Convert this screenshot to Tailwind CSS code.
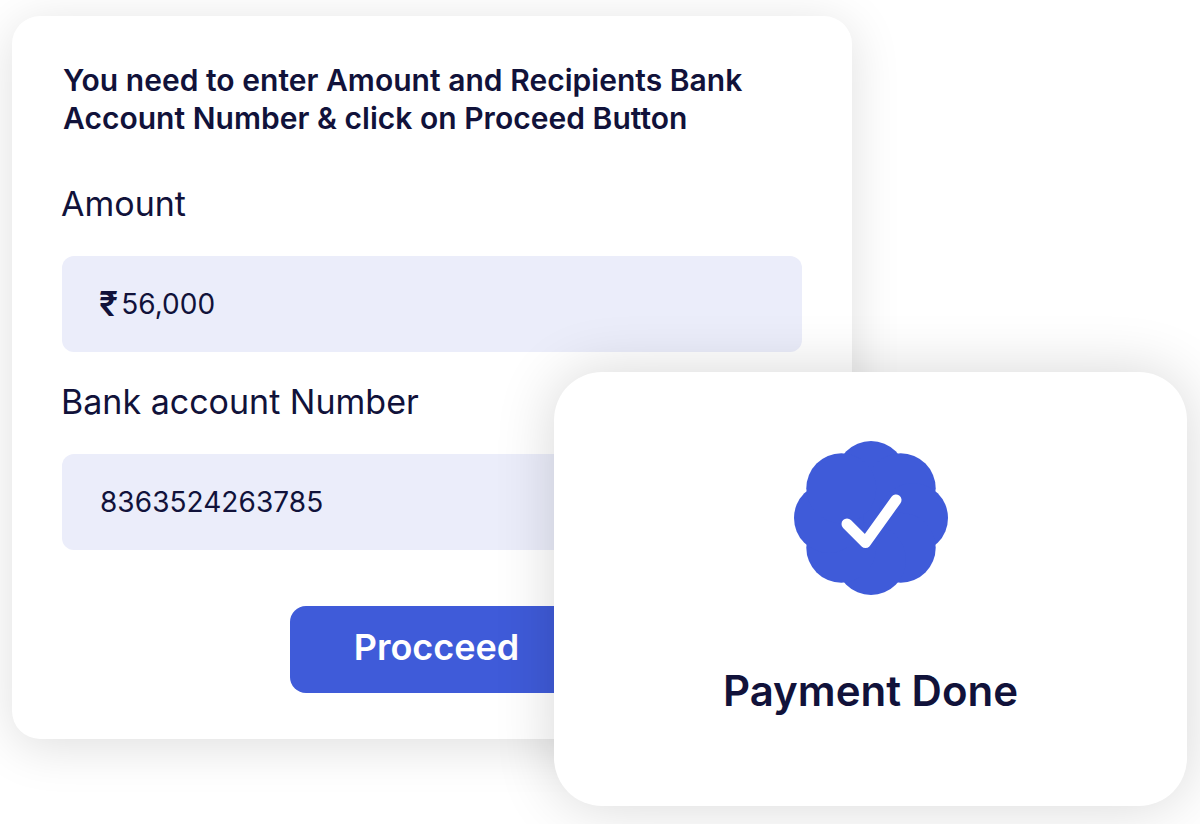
<!DOCTYPE html>
<html lang="en">
<head>
  <meta charset="UTF-8" />
  <meta name="viewport" content="width=device-width, initial-scale=1.0" />
  <title>Payment</title>
  <script src="https://cdn.jsdelivr.net/npm/@tailwindcss/browser@4"></script>
</head>
<body class="bg-white font-['Inter',sans-serif] text-[#11123a] overflow-hidden">
  <div class="relative w-[1200px] h-[824px] overflow-hidden pl-3 pt-4">
    <div class="w-[840px] h-[723px] bg-white rounded-[28px] shadow-[0_8px_50px_rgba(0,0,0,0.13)] pl-[50px] pr-[50px] pt-[45px]">
      <h1 class="text-[30px] leading-[38px] font-semibold pl-[1px] tracking-[0.03px] whitespace-nowrap">You need to enter Amount and Recipients Bank<br>Account Number &amp; click on Proceed Button</h1>
      <label class="block mt-[47px] -ml-[1px] text-[34px] leading-[40px]">Amount</label>
      <div class="mt-[32px] h-[96px] bg-[#ebedfa] rounded-xl flex items-center pl-[37px] text-[28px] tracking-[0.05px]">
        <span class="font-semibold text-[34px] leading-none mr-[3px]">₹</span>56,000
      </div>
      <label class="block mt-[30px] -ml-[1px] text-[34px] leading-[40px]">Bank account Number</label>
      <div class="mt-[32px] h-[96px] bg-[#ebedfa] rounded-xl flex items-center pl-[38px] text-[28px] tracking-[0.05px]">8363524263785</div>
      <div class="mt-[56px] ml-[228px] w-[293px] h-[87px] pb-[6px] bg-[#3f5bd9] rounded-2xl flex items-center justify-center text-white text-[36px] font-semibold">Procceed</div>
    </div>

    <div class="absolute left-[554px] top-[372px] w-[633px] h-[434px] bg-white rounded-[48px] shadow-[0_0_60px_rgba(0,0,0,0.16)] flex flex-col items-center pt-[68px]">
      <svg class="w-[156px] h-[156px]" viewBox="0 0 156 156">
        <g fill="#3f5bd9">
          <circle cx="78" cy="78" r="50" />
          <circle cx="78" cy="36" r="35" />
          <circle cx="107.7" cy="48.3" r="35" />
          <circle cx="120" cy="78" r="35" />
          <circle cx="107.7" cy="107.7" r="35" />
          <circle cx="78" cy="120" r="35" />
          <circle cx="48.3" cy="107.7" r="35" />
          <circle cx="36" cy="78" r="35" />
          <circle cx="48.3" cy="48.3" r="35" />
        </g>
        <path d="M54 84 L72.5 102.5 L103 60" fill="none" stroke="#fff" stroke-width="11" stroke-linecap="round" stroke-linejoin="round" />
      </svg>
      <div class="mt-[70px] text-[42px] leading-[50px] font-semibold">Payment Done</div>
    </div>
  </div>
</body>
</html>
